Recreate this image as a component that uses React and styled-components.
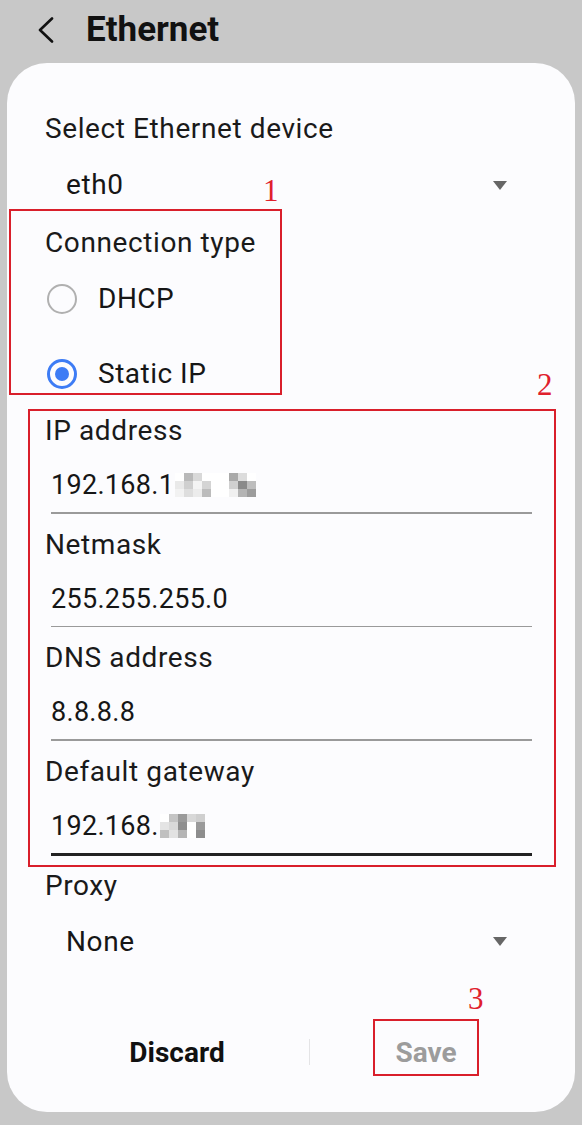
import React from 'react'
import styled, { createGlobalStyle } from 'styled-components'

const GlobalStyle = createGlobalStyle`
  html, body {
    margin: 0;
    padding: 0;
    background: #c8c8c8;
  }
  * { box-sizing: border-box; }
`

// pixelated redaction blocks, row by row
const ipBlur = [
  '#fff', '#b9b9b9', '#d9d9d9', '#fff', '#fff', '#fff', '#a9a9a9', '#dcdcdc', '#fff',
  '#e9e9e9', '#cfcfcf', '#f4f4f4', '#d4d4d4', '#fff', '#fff', '#d0d0d0', '#8a8a8a', '#bdbdbd',
  '#f2f2f2', '#dedede', '#ececec', '#bcbcbc', '#fff', '#fff', '#f0f0f0', '#b4b4b4', '#9c9c9c',
]

const gwBlur = [
  '#fff', '#c4c4c4', '#9a9a9a', '#d8d8d8', '#cfcfcf',
  '#e4e4e4', '#d9d9d9', '#8f8f8f', '#fff', '#9a9a9a',
  '#c0c0c0', '#e2e2e2', '#b5b5b5', '#fff', '#8d8d8d',
]

const ipFields = [
  { label: 'IP address', value: '192.168.1', blur: ipBlur, cols: 9 },
  { label: 'Netmask', value: '255.255.255.0' },
  { label: 'DNS address', value: '8.8.8.8' },
  { label: 'Default gateway', value: '192.168.', blur: gwBlur, cols: 5, active: true },
]

function App() {
  return (
    <Page>
      <GlobalStyle />
      <Header>
        <BackButton>
          <svg width="20" height="26" viewBox="0 0 20 26">
            <polyline points="16,1.5 4,13 16,24.5" fill="none" stroke="#111" strokeWidth="2.6" strokeLinecap="round" strokeLinejoin="round" />
          </svg>
        </BackButton>
        <Title>Ethernet</Title>
      </Header>
      <Card>
        <Label>Select Ethernet device</Label>
        <Dropdown>
          <span>eth0</span>
          <Caret />
        </Dropdown>

        <Marked $left={2} $width={273} $height={186}>
          <Note $left={252} $top={-36}>1</Note>
          <Label $inset={34} $top={14}>Connection type</Label>
          <RadioRow $height={75}>
            <Radio />
            <span>DHCP</span>
          </RadioRow>
          <RadioRow $height={75}>
            <Radio $checked />
            <span>Static IP</span>
          </RadioRow>
        </Marked>

        <Marked $left={21} $width={528} $top={14}>
          <Note $left={507} $top={-42}>2</Note>
          {ipFields.map((f) => (
            <Field key={f.label}>
              <Label $inset={15} $top={2}>{f.label}</Label>
              <Value>
                {f.value}
                {f.blur && (
                  <Mosaic $cols={f.cols}>
                    {f.blur.map((c, i) => (
                      <Pixel key={i} $color={c} />
                    ))}
                  </Mosaic>
                )}
              </Value>
              <Underline $active={f.active} />
            </Field>
          ))}
        </Marked>

        <Label $top={1}>Proxy</Label>
        <Dropdown>
          <span>None</span>
          <Caret />
        </Dropdown>

        <Footer>
          <FooterButton>Discard</FooterButton>
          <Divider />
          <SaveCell>
            <SaveButton>
              <Note $left={93} $top={-38}>3</Note>
              Save
            </SaveButton>
          </SaveCell>
        </Footer>
      </Card>
    </Page>
  )
}

export default App

const Page = styled.div`
  width: 582px;
  height: 1125px;
  overflow: hidden;
  font-family: Roboto, "Noto Sans", sans-serif;
  color: #161616;
`

const Header = styled.div`
  height: 63px;
  display: flex;
  align-items: center;
  padding-left: 36px;
  padding-bottom: 4px;
`

const BackButton = styled.div`
  width: 50px;
  display: flex;
  align-items: center;
`

const Title = styled.h1`
  margin: 0;
  font-size: 35px;
  font-weight: 700;
  color: #111;
`

const Card = styled.div`
  margin: 0 7px;
  height: 1049px;
  background: #fcfcfe;
  border-radius: 40px;
  padding-top: 48px;
`

const Label = styled.div`
  font-size: 28px;
  letter-spacing: 0.6px;
  line-height: 36px;
  padding-left: ${(p) => (p.$inset != null ? p.$inset : 38)}px;
  margin-top: ${(p) => p.$top || 0}px;
  color: #1a1a1a;
  white-space: nowrap;
`

const Dropdown = styled.div`
  height: 62px;
  padding: 20px 68px 6px 59px;
  display: flex;
  justify-content: space-between;
  align-items: center;
  font-size: 28px;
  letter-spacing: 0.6px;
  line-height: 36px;
`

const Caret = styled.span`
  width: 0;
  height: 0;
  border-left: 7px solid transparent;
  border-right: 7px solid transparent;
  border-top: 9px solid #666;
`

const Marked = styled.div`
  position: relative;
  margin-left: ${(p) => p.$left}px;
  margin-top: ${(p) => p.$top || 0}px;
  width: ${(p) => p.$width}px;
  height: ${(p) => (p.$height ? `${p.$height}px` : 'auto')};
  border: 2px solid #d91f2b;
`

const Note = styled.span`
  position: absolute;
  left: ${(p) => p.$left}px;
  top: ${(p) => p.$top}px;
  font-family: "Liberation Serif", serif;
  font-size: 31px;
  font-weight: 400;
  line-height: 1;
  color: #e0202c;
`

const RadioRow = styled.div`
  height: ${(p) => p.$height}px;
  display: flex;
  align-items: center;
  gap: 21px;
  padding-left: 36px;
  font-size: 28px;
  letter-spacing: 0.5px;
  white-space: nowrap;
`

const Radio = styled.span`
  width: 30px;
  height: 30px;
  border-radius: 50%;
  flex: none;
  border: ${(p) => (p.$checked ? '3px solid #3d7cf5' : '2.5px solid #b0b0b0')};
  display: flex;
  align-items: center;
  justify-content: center;
  &::after {
    content: '';
    display: ${(p) => (p.$checked ? 'block' : 'none')};
    width: 14px;
    height: 14px;
    border-radius: 50%;
    background: #3d7cf5;
  }
`

const Field = styled.div`
  padding-bottom: 11px;
  &:last-child {
    padding-bottom: 9px;
  }
`

const Value = styled.div`
  margin-top: 18px;
  padding-left: 21px;
  font-size: 27px;
  letter-spacing: 0.3px;
  line-height: 36px;
  display: flex;
  align-items: center;
`

const Mosaic = styled.span`
  display: inline-grid;
  grid-template-columns: repeat(${(p) => p.$cols}, 9px);
  grid-auto-rows: 8px;
  margin-left: 1px;
`

const Pixel = styled.span`
  background: ${(p) => p.$color};
`

const Underline = styled.div`
  margin: 9px 0 0 21px;
  width: 481px;
  height: ${(p) => (p.$active ? '3px' : '1.5px')};
  background: ${(p) => (p.$active ? '#222' : '#9a9a9a')};
`

const Footer = styled.div`
  margin-top: 53px;
  padding-left: 38px;
  height: 57px;
  display: grid;
  grid-template-columns: 264px 1px 232px;
  align-items: center;
`

const FooterButton = styled.div`
  padding-top: 10px;
  text-align: center;
  font-size: 28px;
  font-weight: 700;
  color: #111;
`

const Divider = styled.div`
  margin-top: 10px;
  height: 26px;
  background: #e4e4e6;
`

const SaveCell = styled.div`
  display: flex;
  justify-content: center;
`

const SaveButton = styled.div`
  position: relative;
  width: 106px;
  height: 57px;
  padding-top: 10px;
  border: 2px solid #d91f2b;
  display: flex;
  align-items: center;
  justify-content: center;
  font-size: 28px;
  font-weight: 700;
  color: #9c9c9c;
`
